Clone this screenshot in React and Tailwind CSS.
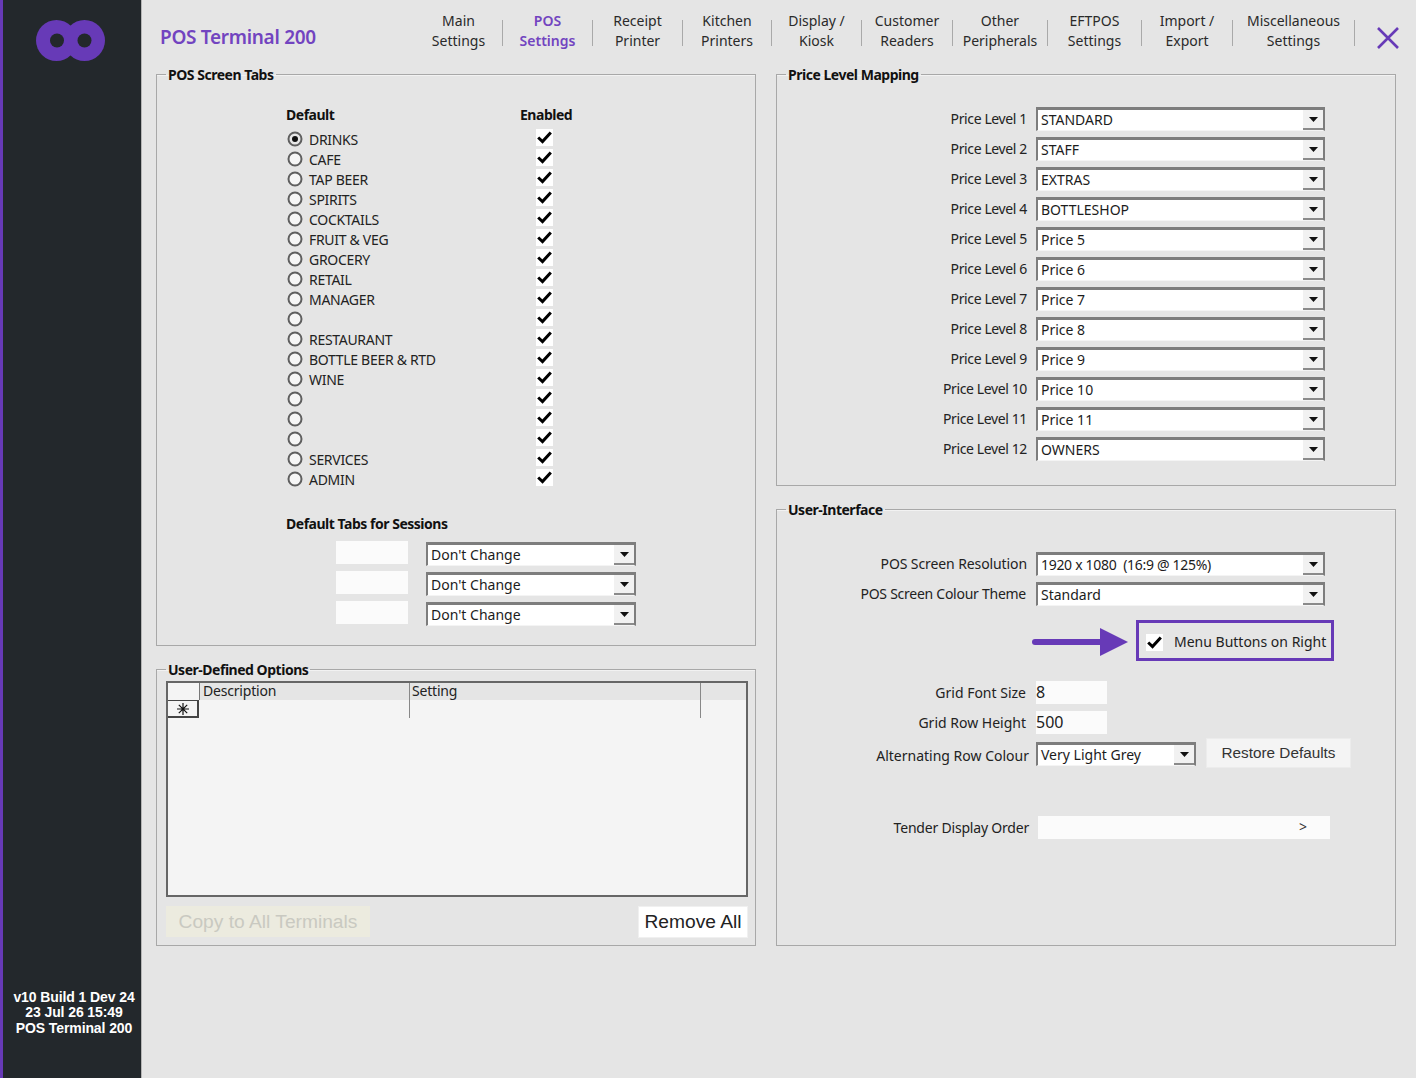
import React from 'react';

const FONT = 'font-["Noto_Sans",sans-serif]';

const tabs = [
  { w: 'w-[88px]', a: 'Main', b: 'Settings' },
  { w: 'w-[90px]', a: 'POS', b: 'Settings', active: true },
  { w: 'w-[90px]', a: 'Receipt', b: 'Printer' },
  { w: 'w-[89px]', a: 'Kitchen', b: 'Printers' },
  { w: 'w-[90px]', a: 'Display /', b: 'Kiosk' },
  { w: 'w-[91px]', a: 'Customer', b: 'Readers' },
  { w: 'w-[95px]', a: 'Other', b: 'Peripherals' },
  { w: 'w-[94px]', a: 'EFTPOS', b: 'Settings' },
  { w: 'w-[91px]', a: 'Import /', b: 'Export' },
  { w: 'w-[122px]', a: 'Miscellaneous', b: 'Settings' },
];

const screenTabs = ['DRINKS', 'CAFE', 'TAP BEER', 'SPIRITS', 'COCKTAILS', 'FRUIT & VEG', 'GROCERY', 'RETAIL', 'MANAGER', '', 'RESTAURANT', 'BOTTLE BEER & RTD', 'WINE', '', '', '', 'SERVICES', 'ADMIN'];

const priceLevels = ['STANDARD', 'STAFF', 'EXTRAS', 'BOTTLESHOP', 'Price 5', 'Price 6', 'Price 7', 'Price 8', 'Price 9', 'Price 10', 'Price 11', 'OWNERS'];

function Logo() {
  return (
    <svg width="69" height="41" viewBox="0 0 69 41" className="block">
      <circle cx="20.5" cy="20.5" r="20.5" fill="#673AB7" />
      <circle cx="48.5" cy="20.5" r="20.5" fill="#673AB7" />
      <circle cx="21" cy="20.5" r="7" fill="#23282C" />
      <circle cx="48.5" cy="20.5" r="7" fill="#23282C" />
    </svg>
  );
}

function Radio({ checked }) {
  return (
    <svg width="16" height="16" viewBox="0 0 16 16" className="block shrink-0">
      <circle cx="8" cy="8" r="6.5" fill={checked ? '#e8e8e8' : '#f6f6f6'} stroke="#5f5f5f" strokeWidth="2" />
      {checked && <circle cx="8" cy="8" r="3" fill="#111" />}
    </svg>
  );
}

function CheckBox() {
  return (
    <div className="w-[17px] h-[17px] bg-white flex items-center justify-center shrink-0">
      <svg width="15" height="13" viewBox="0 0 15 13">
        <path d="M1.2 6.5 L5.5 10.6 L13.8 1.4" fill="none" stroke="#000" strokeWidth="3" />
      </svg>
    </div>
  );
}

function Dropdown({ value, className, textClass }) {
  return (
    <div className={`h-[24px] bg-white border-t-[3px] border-l-2 border-r-2 border-[#7d7d7d] border-b border-b-[#f4f4f4] flex items-center relative ${className}`}>
      <span className={`pl-[3px] pb-[1px] text-sm leading-5 text-[#1c1c1c] whitespace-pre ${textClass || ''}`}>{value}</span>
      <div className="absolute right-0 top-0 bottom-0 w-[20px] bg-[#f1f1f1] border-b-2 border-b-[#8a8a8a] flex items-center justify-center">
        <svg width="9" height="5" viewBox="0 0 9 5"><path d="M0 0 H9 L4.5 5 Z" fill="#111" /></svg>
      </div>
    </div>
  );
}

function Group({ title, className, children }) {
  return (
    <fieldset className={`border border-[#a8a8a8] shadow-[inset_0_1px_0_#f2f2f2] ${className}`}>
      <legend className="ml-[9px] px-[2px] text-sm font-bold leading-5 tracking-[-0.48px] text-[#111] relative top-px">{title}</legend>
      {children}
    </fieldset>
  );
}

function Label({ children, className }) {
  return <div className={`text-sm leading-5 text-[#222] text-right shrink-0 ${className}`}>{children}</div>;
}

export default function App() {
  return (
    <div className={`flex h-screen w-full overflow-hidden bg-[#e5e5e5] ${FONT}`}>
      {/* sidebar */}
      <aside className="w-[142px] shrink-0 flex flex-col items-center bg-[#23282c] border-l-[3px] border-l-[#673ab7] border-r border-r-[#b5b5b5]">
        <div className="mt-[20px] mr-[4px]"><Logo /></div>
        <div className="mt-auto mb-[42px] ml-[4px] text-center font-['Liberation_Sans',sans-serif] font-bold text-sm leading-[15.5px] tracking-[-0.1px] text-white whitespace-nowrap">
          <div>v10 Build 1 Dev 24</div>
          <div>23 Jul 26 15:49</div>
          <div>POS Terminal 200</div>
        </div>
      </aside>

      <main className="flex-1 min-w-0">
        {/* top menu */}
        <header className="h-[64px] flex items-start relative">
          <h1 className="ml-[18px] mt-[22px] text-[19px] leading-[30px] font-semibold tracking-[-0.3px] text-[#7244c0] whitespace-nowrap">POS Terminal 200</h1>
          <nav className="ml-auto mr-[61px] mt-[11px] flex items-start">
            {tabs.map((t) => (
              <div key={t.a} className={`${t.w} h-[40px] flex items-center`}>
                <div className={`flex-1 text-center text-sm leading-5 whitespace-nowrap ${t.active ? 'text-[#7244c0] font-semibold' : 'text-[#2a2a2a]'}`}>
                  <div>{t.a}</div>
                  <div>{t.b}</div>
                </div>
                <div className="w-px h-[26px] mt-[3px] bg-[#a9a9a9]"></div>
              </div>
            ))}
          </nav>
          <svg width="24" height="24" viewBox="0 0 24 24" className="absolute right-[16px] top-[26px]">
            <path d="M2 2 L22 22 M22 2 L2 22" stroke="#673ab7" strokeWidth="2.6" fill="none" />
          </svg>
        </header>

        <div className="flex gap-[20px] pl-[14px]">
          {/* left column */}
          <div className="w-[600px] flex flex-col gap-[13px]">
            <Group title="POS Screen Tabs" className="h-[582px]">
              <div className="pl-[129px] pt-[21px]">
                <div className="flex text-sm leading-5 font-bold tracking-[-0.48px] text-[#111]">
                  <div className="w-[234px]">Default</div>
                  <div>Enabled</div>
                </div>
                <div className="mt-[4px]">
                  {screenTabs.map((name, i) => (
                    <div key={i} className="h-[20px] flex items-center">
                      <div className="w-[250px] pl-px flex items-center gap-[6px]">
                        <Radio checked={i === 0} />
                        <span className="text-sm leading-5 mt-[2px] text-[#222] tracking-[-0.3px]">{name}</span>
                      </div>
                      <div className="-mt-[3px]"><CheckBox /></div>
                    </div>
                  ))}
                </div>
                <div className="mt-[25px] text-sm leading-5 font-bold tracking-[-0.48px] text-[#111]">Default Tabs for Sessions</div>
                <div className="mt-[7px] flex flex-col">
                  {[0, 1, 2].map((i) => (
                    <div key={i} className="h-[30px] flex items-start pl-[50px]">
                      <div className="w-[72px] h-[23px] bg-[#fbfbfb]"></div>
                      <Dropdown value="Don't Change" className="w-[210px] ml-[18px] mt-[1px]" />
                    </div>
                  ))}
                </div>
              </div>
            </Group>

            <Group title="User-Defined Options" className="h-[287px]">
              <div className="pl-[9px] pr-[7px] pt-[3px]">
                <div className="h-[216px] border-2 border-[#666] bg-[#f4f4f4] -mt-px">
                  <div className="flex h-[35px]">
                    <div className="w-[31px] flex flex-col">
                      <div className="h-[17px] bg-[#f4f4f4]"></div>
                      <div className="h-[18px] border-t border-r-2 border-b-2 border-[#444] flex items-center justify-center">
                        <svg width="12" height="12" viewBox="0 0 12 12">
                          <path d="M6 0 V12 M0 6 H12 M1.8 1.8 L10.2 10.2 M10.2 1.8 L1.8 10.2" stroke="#111" strokeWidth="1.2" />
                        </svg>
                      </div>
                    </div>
                    <div className="flex-1 flex flex-col relative">
                      <div className="h-[17px] bg-[#e5e5e5] flex">
                        <div className="w-[210px] pl-[3px] text-sm leading-4 tracking-[-0.2px] text-[#222] border-l border-[#777]">Description</div>
                        <div className="w-[291px] pl-[3px] text-sm leading-4 tracking-[-0.2px] text-[#222]">Setting</div>
                      </div>
                      <div className="absolute left-[210px] top-0 bottom-0 w-px bg-[#888]"></div>
                      <div className="absolute left-[501px] top-0 bottom-0 w-px bg-[#888]"></div>
                    </div>
                  </div>
                </div>
                <div className="mt-[9px] flex justify-between items-start font-['Liberation_Sans',sans-serif] text-[19.2px] leading-[30px]">
                  <button className="w-[204px] h-[31px] bg-[#ecebdf] text-[#c9c9c1]">Copy to All Terminals</button>
                  <button className="w-[108px] h-[30px] mt-px mr-px bg-white text-[#222] shadow-[0_0_0_1px_#f0f0f0]">Remove All</button>
                </div>
              </div>
            </Group>
          </div>

          {/* right column */}
          <div className="w-[620px] flex flex-col gap-[13px]">
            <Group title="Price Level Mapping" className="h-[422px]">
              <div className="pt-[23px]">
                {priceLevels.map((p, i) => (
                  <div key={i} className="h-[30px] flex items-start">
                    <Label className="w-[250px] pt-[2px] tracking-[-0.38px]">Price Level {i + 1}</Label>
                    <Dropdown value={p} className="w-[289px] ml-[9px]" />
                  </div>
                ))}
              </div>
            </Group>

            <Group title="User-Interface" className="h-[447px]">
              <div className="pt-[33px]">
                <div className="h-[30px] flex items-start">
                  <Label className="w-[250px] pt-[2px] tracking-[-0.1px]">POS Screen Resolution</Label>
                  <Dropdown value="1920 x 1080  (16:9 @ 125%)" textClass="tracking-[-0.3px]" className="w-[289px] ml-[9px]" />
                </div>
                <div className="h-[30px] flex items-start">
                  <Label className="w-[249px] pt-[2px] tracking-[-0.26px]">POS Screen Colour Theme</Label>
                  <Dropdown value="Standard" className="w-[289px] ml-[10px]" />
                </div>
                <div className="mt-[8px] flex items-center">
                  <svg width="97" height="28" viewBox="0 0 97 28" className="ml-[255px] mt-[3px] shrink-0">
                    <path d="M3 14 H70" stroke="#673ab7" strokeWidth="6" strokeLinecap="round" />
                    <path d="M68 0 L96 14 L68 28 Z" fill="#673ab7" />
                  </svg>
                  <div className="ml-[7px] w-[198px] h-[41px] border-[3px] border-[#673ab7] flex items-center pl-[7px]">
                    <div className="mt-[4px]"><CheckBox /></div>
                    <span className="ml-[11px] mt-[2px] text-sm leading-5 text-[#222] whitespace-nowrap">Menu Buttons on Right</span>
                  </div>
                </div>
                <div className="mt-[20px] h-[30px] flex items-start">
                  <Label className="w-[249px] pt-[2px]">Grid Font Size</Label>
                  <div className="ml-[10px] w-[71px] h-[23px] bg-[#fbfbfb] text-base leading-[23px] text-[#222]">8</div>
                </div>
                <div className="h-[30px] flex items-start">
                  <Label className="w-[249px] pt-[2px]">Grid Row Height</Label>
                  <div className="ml-[10px] w-[71px] h-[23px] bg-[#fbfbfb] text-base leading-[23px] text-[#222]">500</div>
                </div>
                <div className="flex items-start">
                  <Label className="w-[252px] pt-[5px]">Alternating Row Colour</Label>
                  <Dropdown value="Very Light Grey" className="w-[160px] ml-[7px] mt-[1px]" />
                  <button className="ml-[11px] w-[143px] h-[28px] -mt-[2px] bg-[#f4f4f4] shadow-[0_0_0_1px_#ececec] font-['Liberation_Sans',sans-serif] text-[15.3px] leading-[28px] text-[#333]">Restore Defaults</button>
                </div>
                <div className="mt-[49px] flex items-start">
                  <Label className="w-[252px] pt-[2px] tracking-[-0.2px]">Tender Display Order</Label>
                  <div className="ml-[9px] w-[292px] h-[23px] bg-[#fbfbfb] text-right pr-[23px] text-sm leading-[21px] text-[#333]">&gt;</div>
                </div>
              </div>
            </Group>
          </div>
        </div>
      </main>
    </div>
  );
}
